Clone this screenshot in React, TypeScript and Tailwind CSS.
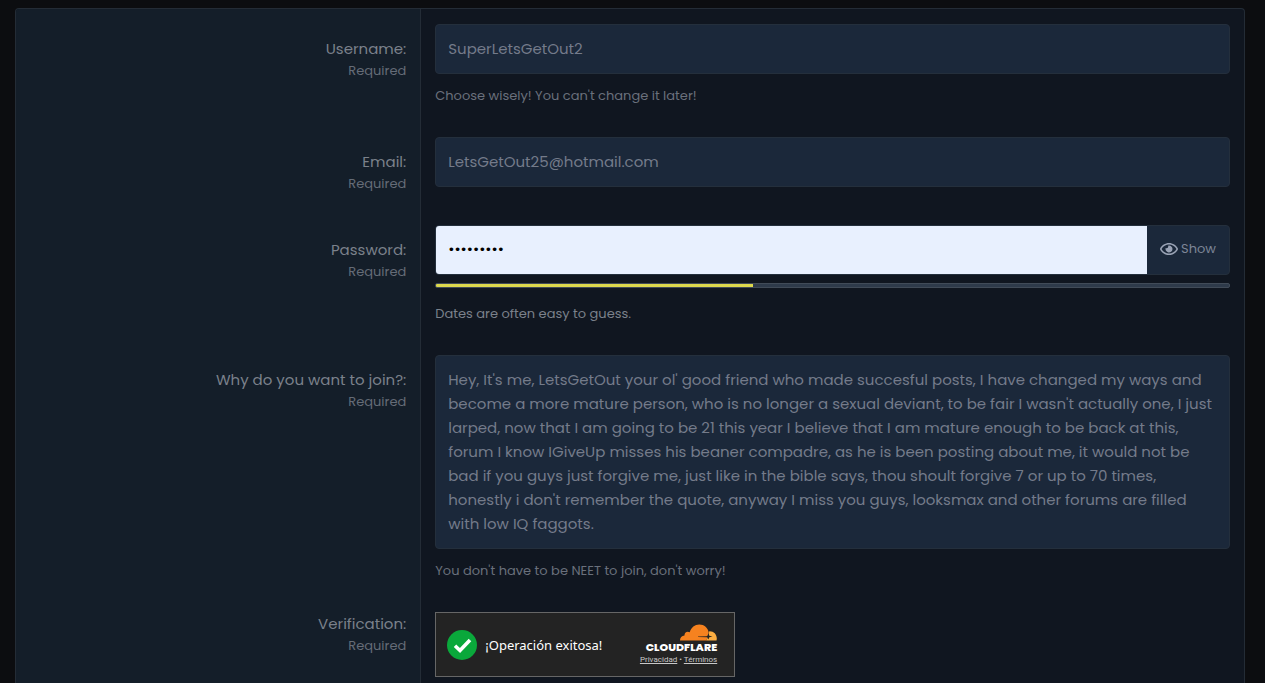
import { useState, type ReactNode } from "react";

const FIELD =
  "block w-full border border-[#242f3c] bg-[#1b283a] px-3 text-[15px] leading-6 text-[#747b8a] outline-none";

const REASON =
  "Hey, It's me, LetsGetOut your ol' good friend who made succesful posts, I have changed my ways and become a more mature person, who is no longer a sexual deviant, to be fair I wasn't actually one, I just larped, now that I am going to be 21 this year I believe that I am mature enough to be back at this, forum I know IGiveUp misses his beaner compadre, as he is been posting about me, it would not be bad if you guys just forgive me, just like in the bible says, thou shoult forgive 7 or up to 70 times, honestly i don't remember the quote, anyway I miss you guys, looksmax and other forums are filled with low IQ faggots.";

function FormRow({
  label,
  htmlFor,
  compact,
  grow,
  children,
}: {
  label: string;
  htmlFor?: string;
  compact?: boolean;
  grow?: boolean;
  children: ReactNode;
}) {
  return (
    <div className={`flex ${grow ? "flex-1" : ""}`}>
      <div
        className={`w-[33%] shrink-0 border-r border-[#242c36] bg-[#141e29] pr-3.5 pb-4 text-right ${
          compact ? "pt-[15px]" : "pt-7"
        }`}
      >
        {htmlFor ? (
          <label htmlFor={htmlFor} className="block text-[15px] leading-6 text-[#7b818b]">
            {label}
          </label>
        ) : (
          <span className="block text-[15px] leading-6 text-[#7b818b]">{label}</span>
        )}
        <span className="block text-[13px] leading-5 text-[#656c77]">Required</span>
      </div>
      <div className="min-w-0 flex-1 px-3.5 pt-[15px]">{children}</div>
    </div>
  );
}

function Hint({ children }: { children: ReactNode }) {
  return <p className="mt-3 mb-4 text-[13px] leading-5 text-[#6a707c]">{children}</p>;
}

function EyeIcon() {
  return (
    <svg viewBox="0 0 576 512" className="h-4 w-[18px]" fill="#9aa3b5" aria-hidden="true">
      <path d="M288 144a110.94 110.94 0 0 0-31.24 5 55.4 55.4 0 0 1 7.24 27 56 56 0 0 1-56 56 55.4 55.4 0 0 1-27-7.24A111.71 111.71 0 1 0 288 144zm284.52 97.4C518.29 135.59 410.93 64 288 64S57.68 135.64 3.48 241.41a32.35 32.35 0 0 0 0 29.19C57.71 376.41 165.07 448 288 448s230.32-71.64 284.52-177.41a32.35 32.35 0 0 0 0-29.19zM288 400c-98.65 0-189.09-55-237.93-144C98.91 167 189.34 112 288 112s189.09 55 237.93 144C477.1 345 386.66 400 288 400z" />
    </svg>
  );
}

function Turnstile() {
  return (
    <div className="flex h-[65px] w-[300px] items-center justify-between border border-[#666] bg-[#232323] pr-[17px] pl-[11px] font-['Noto_Sans',sans-serif]">
      <div className="flex items-center gap-2">
        <svg viewBox="0 0 30 30" className="size-[30px]" aria-hidden="true">
          <circle cx="15" cy="15" r="15" fill="#0aa83b" />
          <path d="M8 15.800l5 4.700 10-10.500" fill="none" stroke="#fff" strokeWidth="3.600" />
        </svg>
        <span className="text-[13px] leading-5 text-white">¡Operación exitosa!</span>
      </div>
      <div className="flex flex-col items-end pt-px">
        <svg viewBox="0 0 37 17" className="h-[17px] w-[37px]" aria-hidden="true">
          <path
            d="M0 16.500C0 13.500 1.700 11.800 4.500 11.600 4.200 8.400 7.300 6.800 9.700 8.300 11.200 3.500 14.800.500 19.300.500c5 0 8.700 3.400 9.400 7.800l-1.100 5.700-1.500 2.500z"
            fill="#f6821f"
          />
          <path d="M29.300 7.200c4.400-.2 7.500 3 7.500 7.300 0 .8-.1 1.400-.3 2H26.100l1.500-2.600z" fill="#fbad41" />
          <path d="M18 12.500l8.500-.3 1-.4.900-2.600.9 2.600 3.200.7-3.200.8-.9 2.200-1.100-2.200-9.300-.3z" fill="#232323" />
        </svg>
        <span className="font-[Poppins,sans-serif] text-[11px] leading-[12px] font-extrabold text-white">
          CLOUDFLARE
        </span>
        <div className="font-[Roboto,sans-serif] text-[8px] leading-[13px] text-[#c8c8c8]">
          <a href="#privacidad" className="underline">
            Privacidad
          </a>
          {" • "}
          <a href="#terminos" className="underline">
            Términos
          </a>
        </div>
      </div>
    </div>
  );
}

export default function App() {
  const [username, setUsername] = useState("SuperLetsGetOut2");
  const [email, setEmail] = useState("LetsGetOut25@hotmail.com");
  const [password, setPassword] = useState("gotout025");
  const [reason, setReason] = useState(REASON);
  const [visible, setVisible] = useState(false);
  const strength = 40;

  return (
    <div className="flex min-h-screen flex-col bg-[#0c0d10] pt-2 pr-5 pl-[15px] font-[Poppins,Inter,sans-serif]">
      <form className="flex flex-1 flex-col overflow-hidden rounded-t border-x border-t border-[#242c36] bg-[#101620]">
        <FormRow label="Username:" htmlFor="username">
          <input
            id="username"
            value={username}
            onChange={(e) => setUsername(e.target.value)}
            className={`${FIELD} h-[50px] rounded pb-0.5`}
          />
          <Hint>Choose wisely! You can't change it later!</Hint>
        </FormRow>

        <FormRow label="Email:" htmlFor="email">
          <input
            id="email"
            type="email"
            value={email}
            onChange={(e) => setEmail(e.target.value)}
            className={`${FIELD} h-[50px] rounded pb-0.5`}
          />
        </FormRow>

        <FormRow label="Password:" htmlFor="password">
          <div className="flex h-[50px] overflow-hidden rounded border border-[#242f3c] bg-[#1b283a]">
            <input
              id="password"
              type={visible ? "text" : "password"}
              value={password}
              onChange={(e) => setPassword(e.target.value)}
              className="min-w-0 flex-1 bg-[#e8f0fe] px-3 pb-0.5 text-[15px] text-black outline-none"
            />
            <button
              type="button"
              onClick={() => setVisible(!visible)}
              className="flex w-[82px] items-center justify-center gap-[3px] pb-0.5 text-[13px] text-[#7d8596]"
            >
              <EyeIcon />
              {visible ? "Hide" : "Show"}
            </button>
          </div>
          <div
            role="meter"
            aria-label="Password strength"
            aria-valuenow={strength}
            aria-valuemin={0}
            aria-valuemax={100}
            className="mt-2 mb-4 h-[5px] overflow-hidden rounded-xs border border-[#414b58] bg-[#2e3a4a]"
          >
            <div className="h-full bg-[#dcd84d]" style={{ width: `${strength}%` }} />
          </div>
          <p className="mb-4 text-[13px] leading-5 text-[#7b818b]">Dates are often easy to guess.</p>
        </FormRow>

        <FormRow label="Why do you want to join?:" htmlFor="reason">
          <textarea
            id="reason"
            rows={7}
            value={reason}
            onChange={(e) => setReason(e.target.value)}
            className={`${FIELD} resize-none overflow-hidden rounded py-3`}
          />
          <Hint>You don't have to be NEET to join, don't worry!</Hint>
        </FormRow>

        <FormRow label="Verification:" compact grow>
          <Turnstile />
        </FormRow>
      </form>
    </div>
  );
}
